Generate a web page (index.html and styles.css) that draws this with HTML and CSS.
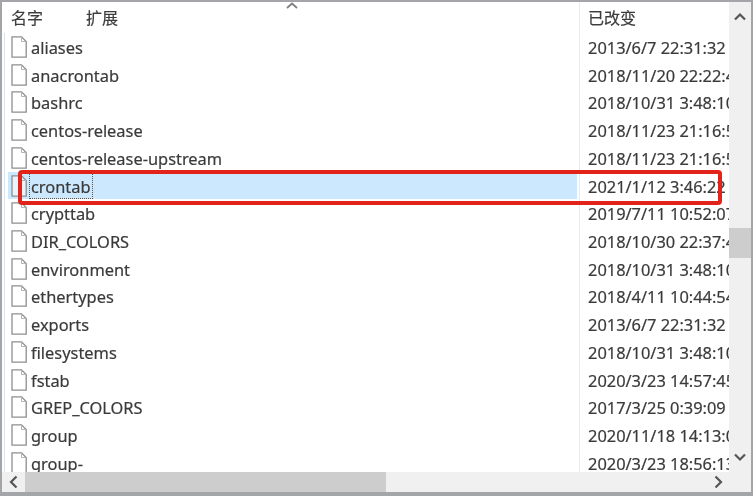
FILE: index.html
```html
<!DOCTYPE html>
<html lang="zh">
<head>
<meta charset="utf-8">
<title>etc</title>
<link rel="stylesheet" href="styles.css">
</head>
<body>
<div class="window">
  <div class="content">
    <div class="pane">
      <div class="header">
        <div class="col-name"><span class="h-name">名字</span><span class="h-ext">扩展</span>
          <svg class="sort" width="12" height="7" viewBox="0 0 12 7"><path d="M1 6 6 1.500 11 6" fill="none" stroke="#808080" stroke-width="1.800"/></svg>
        </div>
        <div class="col-date">已改变</div>
      </div>
      <div class="rows">
        <div class="row"><div class="col-name"><svg class="file" viewBox="0 0 16 22"><path d="M1 .8h9.500L15.200 5.500V21.200H1z" fill="#fff" stroke="#8e8e8e" stroke-width="1.300"/><path d="M10.500.8v4.700h4.700" fill="none" stroke="#b5b5b5"/></svg><span class="fname">aliases</span></div><div class="col-date">2013/6/7 22:31:32</div></div>
        <div class="row"><div class="col-name"><svg class="file" viewBox="0 0 16 22"><path d="M1 .8h9.500L15.200 5.500V21.200H1z" fill="#fff" stroke="#8e8e8e" stroke-width="1.300"/><path d="M10.500.8v4.700h4.700" fill="none" stroke="#b5b5b5"/></svg><span class="fname">anacrontab</span></div><div class="col-date">2018/11/20 22:22:44</div></div>
        <div class="row"><div class="col-name"><svg class="file" viewBox="0 0 16 22"><path d="M1 .8h9.500L15.200 5.500V21.200H1z" fill="#fff" stroke="#8e8e8e" stroke-width="1.300"/><path d="M10.500.8v4.700h4.700" fill="none" stroke="#b5b5b5"/></svg><span class="fname">bashrc</span></div><div class="col-date">2018/10/31 3:48:10</div></div>
        <div class="row"><div class="col-name"><svg class="file" viewBox="0 0 16 22"><path d="M1 .8h9.500L15.200 5.500V21.200H1z" fill="#fff" stroke="#8e8e8e" stroke-width="1.300"/><path d="M10.500.8v4.700h4.700" fill="none" stroke="#b5b5b5"/></svg><span class="fname">centos-release</span></div><div class="col-date">2018/11/23 21:16:51</div></div>
        <div class="row"><div class="col-name"><svg class="file" viewBox="0 0 16 22"><path d="M1 .8h9.500L15.200 5.500V21.200H1z" fill="#fff" stroke="#8e8e8e" stroke-width="1.300"/><path d="M10.500.8v4.700h4.700" fill="none" stroke="#b5b5b5"/></svg><span class="fname">centos-release-upstream</span></div><div class="col-date">2018/11/23 21:16:51</div></div>
        <div class="row selected"><div class="col-name"><svg class="file" viewBox="0 0 16 22"><path d="M1 .8h9.500L15.200 5.500V21.200H1z" fill="#e8f3fb" stroke="#8e8e8e" stroke-width="1.300"/><path d="M10.500.8v4.700h4.700" fill="none" stroke="#b5b5b5"/></svg><span class="fname focus">crontab</span></div><div class="col-date">2021/1/12 3:46:22</div></div>
        <div class="row"><div class="col-name"><svg class="file" viewBox="0 0 16 22"><path d="M1 .8h9.500L15.200 5.500V21.200H1z" fill="#fff" stroke="#8e8e8e" stroke-width="1.300"/><path d="M10.500.8v4.700h4.700" fill="none" stroke="#b5b5b5"/></svg><span class="fname">crypttab</span></div><div class="col-date">2019/7/11 10:52:07</div></div>
        <div class="row"><div class="col-name"><svg class="file" viewBox="0 0 16 22"><path d="M1 .8h9.500L15.200 5.500V21.200H1z" fill="#fff" stroke="#8e8e8e" stroke-width="1.300"/><path d="M10.500.8v4.700h4.700" fill="none" stroke="#b5b5b5"/></svg><span class="fname">DIR_COLORS</span></div><div class="col-date">2018/10/30 22:37:44</div></div>
        <div class="row"><div class="col-name"><svg class="file" viewBox="0 0 16 22"><path d="M1 .8h9.500L15.200 5.500V21.200H1z" fill="#fff" stroke="#8e8e8e" stroke-width="1.300"/><path d="M10.500.8v4.700h4.700" fill="none" stroke="#b5b5b5"/></svg><span class="fname">environment</span></div><div class="col-date">2018/10/31 3:48:10</div></div>
        <div class="row"><div class="col-name"><svg class="file" viewBox="0 0 16 22"><path d="M1 .8h9.500L15.200 5.500V21.200H1z" fill="#fff" stroke="#8e8e8e" stroke-width="1.300"/><path d="M10.500.8v4.700h4.700" fill="none" stroke="#b5b5b5"/></svg><span class="fname">ethertypes</span></div><div class="col-date">2018/4/11 10:44:54</div></div>
        <div class="row"><div class="col-name"><svg class="file" viewBox="0 0 16 22"><path d="M1 .8h9.500L15.200 5.500V21.200H1z" fill="#fff" stroke="#8e8e8e" stroke-width="1.300"/><path d="M10.500.8v4.700h4.700" fill="none" stroke="#b5b5b5"/></svg><span class="fname">exports</span></div><div class="col-date">2013/6/7 22:31:32</div></div>
        <div class="row"><div class="col-name"><svg class="file" viewBox="0 0 16 22"><path d="M1 .8h9.500L15.200 5.500V21.200H1z" fill="#fff" stroke="#8e8e8e" stroke-width="1.300"/><path d="M10.500.8v4.700h4.700" fill="none" stroke="#b5b5b5"/></svg><span class="fname">filesystems</span></div><div class="col-date">2018/10/31 3:48:10</div></div>
        <div class="row"><div class="col-name"><svg class="file" viewBox="0 0 16 22"><path d="M1 .8h9.500L15.200 5.500V21.200H1z" fill="#fff" stroke="#8e8e8e" stroke-width="1.300"/><path d="M10.500.8v4.700h4.700" fill="none" stroke="#b5b5b5"/></svg><span class="fname">fstab</span></div><div class="col-date">2020/3/23 14:57:45</div></div>
        <div class="row"><div class="col-name"><svg class="file" viewBox="0 0 16 22"><path d="M1 .8h9.500L15.200 5.500V21.200H1z" fill="#fff" stroke="#8e8e8e" stroke-width="1.300"/><path d="M10.500.8v4.700h4.700" fill="none" stroke="#b5b5b5"/></svg><span class="fname">GREP_COLORS</span></div><div class="col-date">2017/3/25 0:39:09</div></div>
        <div class="row"><div class="col-name"><svg class="file" viewBox="0 0 16 22"><path d="M1 .8h9.500L15.200 5.500V21.200H1z" fill="#fff" stroke="#8e8e8e" stroke-width="1.300"/><path d="M10.500.8v4.700h4.700" fill="none" stroke="#b5b5b5"/></svg><span class="fname">group</span></div><div class="col-date">2020/11/18 14:13:09</div></div>
        <div class="row"><div class="col-name"><svg class="file" viewBox="0 0 16 22"><path d="M1 .8h9.500L15.200 5.500V21.200H1z" fill="#fff" stroke="#8e8e8e" stroke-width="1.300"/><path d="M10.500.8v4.700h4.700" fill="none" stroke="#b5b5b5"/></svg><span class="fname">group-</span></div><div class="col-date">2020/3/23 18:56:13</div></div>
      </div>
    </div>
    <div class="vbar">
      <svg class="arrow" width="16" height="9" viewBox="0 0 16 9"><path d="M3 7.500 8 2.500l5 5" fill="none" stroke="#555" stroke-width="2.200"/></svg>
      <div class="vthumb"></div>
      <div class="grow"></div>
      <svg class="arrow" width="16" height="9" viewBox="0 0 16 9"><path d="M3 1.500 8 6.500l5-5" fill="none" stroke="#555" stroke-width="2.200"/></svg>
    </div>
  </div>
  <div class="hbar">
    <svg class="harrow" width="9" height="14" viewBox="0 0 9 14"><path d="M7.500 1.500 2 7l5.500 5.500" fill="none" stroke="#555" stroke-width="2.200"/></svg>
    <div class="hthumb"></div>
    <div class="grow"></div>
    <svg class="harrow" width="9" height="14" viewBox="0 0 9 14"><path d="M1.500 1.500 7 7l-5.500 5.500" fill="none" stroke="#555" stroke-width="2.200"/></svg>
  </div>
  <div class="annotation"></div>
</div>
</body>
</html>
```
FILE: styles.css
```css
* { box-sizing: border-box; }
html, body { margin: 0; padding: 0; background: #fff; }
body { width: 753px; height: 496px; overflow: hidden; font-family: "Noto Sans", "Noto Sans CJK SC", sans-serif; color: #3a3a3a; -webkit-text-stroke: 0.2px #3a3a3a; }
.window {
  position: relative;
  width: 753px;
  height: 496px;
  border: 2px solid #a3a5a8;
  border-bottom-width: 4px;
  display: flex;
  flex-direction: column;
  background: #fff;
  filter: blur(0.45px);
}
.content { flex: 1; display: flex; min-height: 0; }
.pane { width: 727px; overflow: hidden; }
.header { display: flex; height: 31px; }
.header .col-name { position: relative; width: 577px; align-items: flex-start; padding: 6px 0 0 9px; font-size: 16px; line-height: 20px; color: #3c3c3c; }
.header .col-date { padding: 6px 0 0 8px; font-size: 16px; line-height: 20px; color: #3c3c3c; }
.h-ext { margin-left: 43px; }
.sort { position: absolute; left: 284px; top: 0; }
.col-name { flex: none; display: flex; align-items: flex-start; }
.col-date { flex: 1; min-width: 0; padding-left: 8px; white-space: nowrap; overflow: hidden; border-left: 1px solid #e8ecef; }
.rows { border-left: 1px solid #d9e4ee; margin-left: 2px; height: 441px; overflow: hidden; }
.row { display: flex; height: 27.73px; font-size: 16.4px; line-height: 30px; }
.row .col-name { width: 574px; padding-left: 6px; }
.file { width: 16px; height: 22px; flex: none; margin: 3px 2px 0 0; }
.fname { padding: 0 2px; white-space: nowrap; }
.row.selected .col-name { width: 569px; margin: 0 2px 0 3px; padding-left: 3px; background: #cce8ff; }
.focus { outline: 1px dotted #555; outline-offset: -1px; height: 26px; line-height: 28px; margin-top: 1px; }
.vbar { width: 22px; background: #f0f0f0; display: flex; flex-direction: column; align-items: center; padding: 10px 0; }
.arrow { flex: none; }
.vthumb { width: 22px; height: 30px; background: #cdcdcd; margin-top: 207px; flex: none; }
.grow { flex: 1; }
.hbar { height: 20px; flex: none; background: #f0f0f0; display: flex; align-items: center; padding: 0 28px 0 7px; }
.harrow { flex: none; }
.hthumb { width: 361px; height: 20px; margin-left: 7px; background: #cdcdcd; flex: none; }
.annotation {
  position: absolute;
  left: 16px;
  top: 168px;
  width: 704px;
  height: 35px;
  border: 4px solid #e2231a;
  border-radius: 4px;
}
```
